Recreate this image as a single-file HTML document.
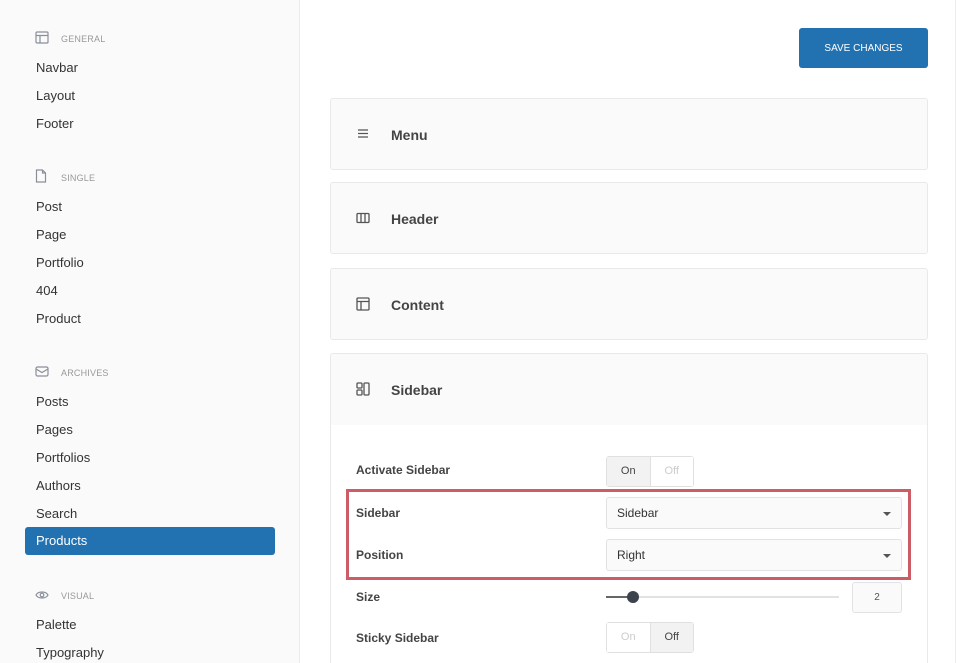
<!DOCTYPE html>
<html style="width:959px;height:663px;overflow:hidden"><head><style>
*{box-sizing:border-box;margin:0;padding:0}
body{width:959px;height:663px;overflow:hidden;background:#fff;font-family:"Liberation Sans",sans-serif;position:relative;color:#333}
.side{position:absolute;left:0;top:0;width:300px;height:663px;background:#fafafb;border-right:1px solid #ececef}
.sec{position:absolute;left:61px;font-size:9px;color:#999;letter-spacing:.2px}
.sic{position:absolute;left:35px}
.it{position:absolute;left:36px;font-size:13px;color:#333;line-height:16px}
.act{position:absolute;left:25px;top:527px;width:250px;height:28px;background:#2271b1;border-radius:3px;color:#fff;font-size:13px;line-height:28px;padding-left:11px}
.btn{position:absolute;left:799px;top:28px;width:129px;height:40px;background:#2271b1;border-radius:3px;color:#fff;font-size:10px;text-align:center;line-height:42px}
.pan{position:absolute;left:330px;width:598px;height:72px;background:#fafafa;border:1px solid #e9e9e9;border-radius:3px}
.pan span{position:absolute;left:60px;top:28px;font-size:14px;font-weight:bold;color:#444}
.pan svg{position:absolute;left:25px;top:28px}
.body{position:absolute;left:330px;top:425px;width:598px;height:238px;background:#fff;border:1px solid #e9e9e9;border-top:none;border-bottom:none}
.lbl{position:absolute;left:356px;font-size:12px;font-weight:bold;color:#444}
.tg{position:absolute;left:606px;width:88px;height:31px;border:1px solid #e0e0e0;border-radius:3px;display:flex;font-size:11px}
.tg div{flex:1;text-align:center;line-height:29px}
.on{background:#f2f2f2;color:#444}.off{color:#ccc;background:#fff}
.sel{position:absolute;left:606px;width:296px;height:32px;border:1px solid #e2e2e5;border-radius:3px;background:#fafafa;font-size:12px;color:#333;line-height:31px;padding-left:10px}
.sel:after{content:"";position:absolute;right:10px;top:14px;border-left:4px solid transparent;border-right:4px solid transparent;border-top:4px solid #555}
.red{position:absolute;left:346px;top:489px;width:565px;height:91px;border:3px solid #cc5c66}
</style></head><body>
<div class="side">
<svg class="sic" style="top:31px" width="14" height="13" viewBox="0 0 14 13" fill="none" stroke="#8a8f99" stroke-width="1.2"><rect x="1" y="1" width="12" height="11" rx="1"/><path d="M1 4.5h12M5 4.5V12"/></svg>
<div class="sec" style="top:34px">GENERAL</div>
<div class="it" style="top:60px">Navbar</div>
<div class="it" style="top:88px">Layout</div>
<div class="it" style="top:116px">Footer</div>
<svg class="sic" style="top:169px" width="12" height="14" viewBox="0 0 12 14" fill="none" stroke="#8a8f99" stroke-width="1.2"><path d="M1.5 1h6l3 3v9h-9z M7.5 1v3h3"/></svg>
<div class="sec" style="top:173px">SINGLE</div>
<div class="it" style="top:199px">Post</div>
<div class="it" style="top:227px">Page</div>
<div class="it" style="top:255px">Portfolio</div>
<div class="it" style="top:283px">404</div>
<div class="it" style="top:311px">Product</div>
<svg class="sic" style="top:366px" width="14" height="11" viewBox="0 0 14 11" fill="none" stroke="#8a8f99" stroke-width="1.2"><rect x="1" y="1" width="12" height="9" rx="1.5"/><path d="M1 3l6 3.5 6-3.5"/></svg>
<div class="sec" style="top:368px">ARCHIVES</div>
<div class="it" style="top:394px">Posts</div>
<div class="it" style="top:422px">Pages</div>
<div class="it" style="top:450px">Portfolios</div>
<div class="it" style="top:478px">Authors</div>
<div class="it" style="top:506px">Search</div>
<div class="act">Products</div>
<svg class="sic" style="top:590px" width="14" height="10" viewBox="0 0 14 10" fill="none" stroke="#8a8f99" stroke-width="1.2"><path d="M1 5c2-4 10-4 12 0-2 4-10 4-12 0z"/><circle cx="7" cy="5" r="1.8"/></svg>
<div class="sec" style="top:591px">VISUAL</div>
<div class="it" style="top:617px">Palette</div>
<div class="it" style="top:645px">Typography</div>
</div>
<div style="position:absolute;left:955px;top:0;width:1px;height:663px;background:#ececec"></div>
<div class="btn">SAVE CHANGES</div>
<div class="pan" style="top:98px"><svg width="14" height="12" viewBox="0 0 14 12" stroke="#555" stroke-width="1.3"><path d="M2 3h10M2 6.5h10M2 10h10"/></svg><span>Menu</span></div>
<div class="pan" style="top:182px"><svg width="14" height="14" viewBox="0 0 14 14" fill="none" stroke="#555" stroke-width="1.3"><rect x="1" y="2.5" width="12" height="9" rx="1"/><path d="M5 2.5v9M9 2.5v9"/></svg><span>Header</span></div>
<div class="pan" style="top:268px"><svg width="14" height="14" viewBox="0 0 14 14" fill="none" stroke="#555" stroke-width="1.3"><rect x="1" y="1" width="12" height="12" rx="1"/><path d="M1 4.5h12M5 4.5V13"/></svg><span>Content</span></div>
<div class="pan" style="top:353px;height:73px;border-bottom-left-radius:0;border-bottom-right-radius:0"><svg width="14" height="14" viewBox="0 0 14 14" fill="none" stroke="#555" stroke-width="1.3"><rect x="1" y="1" width="5" height="5" rx="1"/><rect x="1" y="8" width="5" height="5" rx="1"/><rect x="8" y="1" width="5" height="12" rx="1"/></svg><span>Sidebar</span></div>
<div class="body"></div>
<div class="lbl" style="top:463px">Activate Sidebar</div>
<div class="tg" style="top:456px"><div class="on" style="border-right:1px solid #e0e0e0">On</div><div class="off">Off</div></div>
<div class="red"></div>
<div class="lbl" style="top:506px">Sidebar</div>
<div class="sel" style="top:497px">Sidebar</div>
<div class="lbl" style="top:548px">Position</div>
<div class="sel" style="top:539px">Right</div>
<div class="lbl" style="top:590px">Size</div>
<div style="position:absolute;left:606px;top:596px;width:233px;height:2px;background:#e2e2e6"></div>
<div style="position:absolute;left:606px;top:596px;width:27px;height:2px;background:#666"></div>
<div style="position:absolute;left:627px;top:591px;width:12px;height:12px;border-radius:50%;background:#3d434d"></div>
<div style="position:absolute;left:852px;top:582px;width:50px;height:31px;border:1px solid #e2e2e5;border-radius:3px;background:#fafafa;font-size:10px;color:#555;text-align:center;line-height:29px">2</div>
<div class="lbl" style="top:631px">Sticky Sidebar</div>
<div class="tg" style="top:622px"><div class="off" style="border-right:1px solid #e0e0e0">On</div><div class="on">Off</div></div>
</body></html>
